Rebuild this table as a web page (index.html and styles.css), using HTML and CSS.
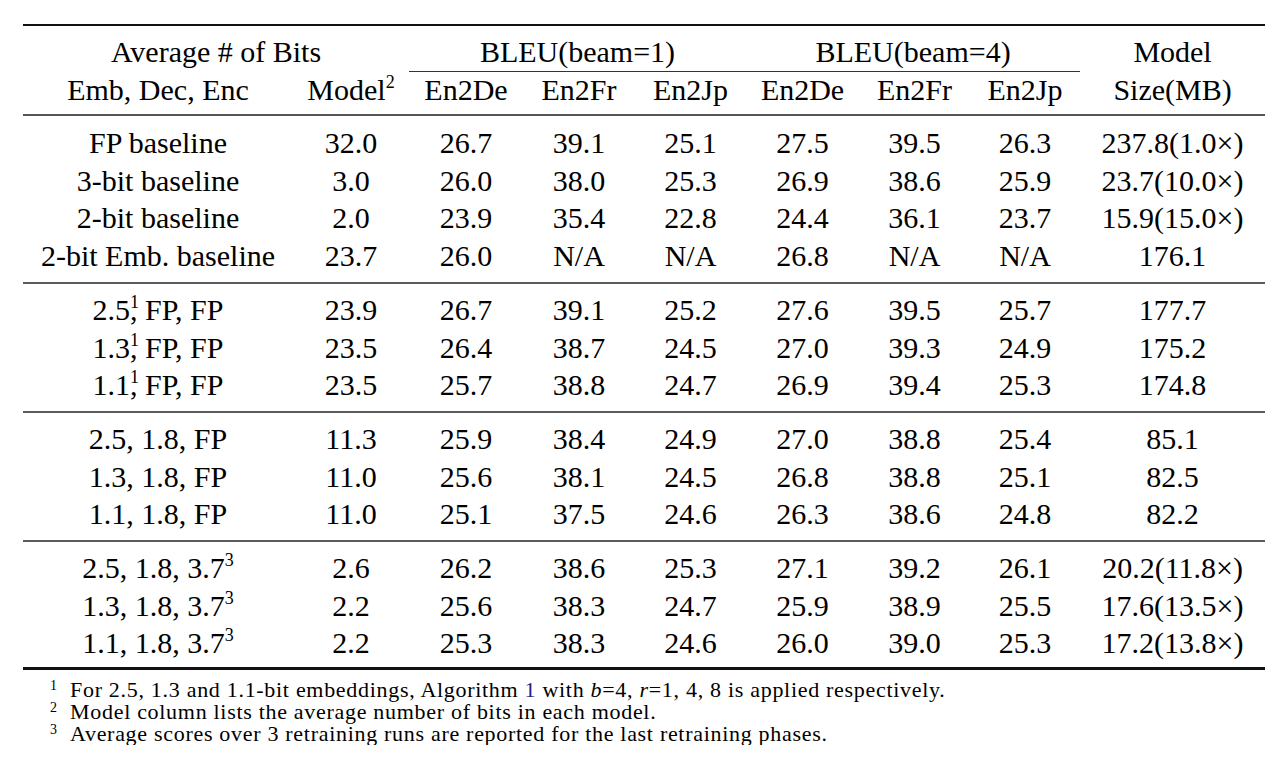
FILE: index.html
```html
<!DOCTYPE html>
<html lang="en">

<head>
  <meta charset="UTF-8" />
  <meta name="viewport" content="width=device-width, initial-scale=1.0" />
  <title>Quantization results</title>
  <link rel="stylesheet" href="styles.css">
</head>

<body>
  <div class="page">
    <table class="results">
      <colgroup>
        <col class="c-bits">
        <col class="c-model">
        <col class="c-b1de">
        <col class="c-b1fr">
        <col class="c-b1jp">
        <col class="c-b4de">
        <col class="c-b4fr">
        <col class="c-b4jp">
        <col class="c-size">
      </colgroup>
      <thead>
        <tr class="head-top">
          <th colspan="2">Average # of Bits</th>
          <th colspan="3" class="span-rule">BLEU(beam=1)</th>
          <th colspan="3" class="span-rule">BLEU(beam=4)</th>
          <th>Model</th>
        </tr>
        <tr class="head-bottom">
          <th>Emb, Dec, Enc</th>
          <th>Model<sup>2</sup></th>
          <th>En2De</th>
          <th>En2Fr</th>
          <th>En2Jp</th>
          <th>En2De</th>
          <th>En2Fr</th>
          <th>En2Jp</th>
          <th>Size(MB)</th>
        </tr>
      </thead>
      <tbody class="first-group">
        <tr><td>FP baseline</td><td>32.0</td><td>26.7</td><td>39.1</td><td>25.1</td><td>27.5</td><td>39.5</td><td>26.3</td><td>237.8(1.0×)</td></tr>
        <tr><td>3-bit baseline</td><td>3.0</td><td>26.0</td><td>38.0</td><td>25.3</td><td>26.9</td><td>38.6</td><td>25.9</td><td>23.7(10.0×)</td></tr>
        <tr><td>2-bit baseline</td><td>2.0</td><td>23.9</td><td>35.4</td><td>22.8</td><td>24.4</td><td>36.1</td><td>23.7</td><td>15.9(15.0×)</td></tr>
        <tr><td>2-bit Emb. baseline</td><td>23.7</td><td>26.0</td><td>N/A</td><td>N/A</td><td>26.8</td><td>N/A</td><td>N/A</td><td>176.1</td></tr>
      </tbody>
      <tbody>
        <tr><td>2.5<sup>1</sup><span class="tuck">,</span> FP, FP</td><td>23.9</td><td>26.7</td><td>39.1</td><td>25.2</td><td>27.6</td><td>39.5</td><td>25.7</td><td>177.7</td></tr>
        <tr><td>1.3<sup>1</sup><span class="tuck">,</span> FP, FP</td><td>23.5</td><td>26.4</td><td>38.7</td><td>24.5</td><td>27.0</td><td>39.3</td><td>24.9</td><td>175.2</td></tr>
        <tr><td>1.1<sup>1</sup><span class="tuck">,</span> FP, FP</td><td>23.5</td><td>25.7</td><td>38.8</td><td>24.7</td><td>26.9</td><td>39.4</td><td>25.3</td><td>174.8</td></tr>
      </tbody>
      <tbody>
        <tr><td>2.5, 1.8, FP</td><td>11.3</td><td>25.9</td><td>38.4</td><td>24.9</td><td>27.0</td><td>38.8</td><td>25.4</td><td>85.1</td></tr>
        <tr><td>1.3, 1.8, FP</td><td>11.0</td><td>25.6</td><td>38.1</td><td>24.5</td><td>26.8</td><td>38.8</td><td>25.1</td><td>82.5</td></tr>
        <tr><td>1.1, 1.8, FP</td><td>11.0</td><td>25.1</td><td>37.5</td><td>24.6</td><td>26.3</td><td>38.6</td><td>24.8</td><td>82.2</td></tr>
      </tbody>
      <tbody class="last-group">
        <tr><td>2.5, 1.8, 3.7<sup>3</sup></td><td>2.6</td><td>26.2</td><td>38.6</td><td>25.3</td><td>27.1</td><td>39.2</td><td>26.1</td><td>20.2(11.8×)</td></tr>
        <tr><td>1.3, 1.8, 3.7<sup>3</sup></td><td>2.2</td><td>25.6</td><td>38.3</td><td>24.7</td><td>25.9</td><td>38.9</td><td>25.5</td><td>17.6(13.5×)</td></tr>
        <tr><td>1.1, 1.8, 3.7<sup>3</sup></td><td>2.2</td><td>25.3</td><td>38.3</td><td>24.6</td><td>26.0</td><td>39.0</td><td>25.3</td><td>17.2(13.8×)</td></tr>
      </tbody>
    </table>

    <div class="notes">
      <div class="note"><span class="mark">1</span>For 2.5, 1.3 and 1.1-bit embeddings, Algorithm <span class="ref">1</span> with <i>b</i>=4, <i>r</i>=1, 4, 8 is applied respectively.</div>
      <div class="note"><span class="mark">2</span>Model column lists the average number of bits in each model.</div>
      <div class="note"><span class="mark">3</span>Average scores over 3 retraining runs are reported for the last retraining phases.</div>
    </div>
  </div>
</body>

</html>
```

FILE: styles.css
```css
body {
  margin: 0;
  padding: 0;
  background: #fff;
  color: #000;
  font-family: "Liberation Serif", "Times New Roman", serif;
}

.page {
  padding: 24px 0 0 23px;
}

.results {
  width: 1242px;
  table-layout: fixed;
  border-collapse: separate;
  border-spacing: 0;
  font-family: "Liberation Serif", "Times New Roman", serif;
  font-size: 30px;
}

.c-bits { width: 270px; }
.c-model { width: 116px; }
.c-b1de { width: 114px; }
.c-b1fr { width: 112px; }
.c-b1jp { width: 111px; }
.c-b4de { width: 113px; }
.c-b4fr { width: 111px; }
.c-b4jp { width: 110px; }
.c-size { width: 185px; }

th, td {
  padding: 0;
  text-align: center;
  vertical-align: top;
  font-weight: normal;
  white-space: nowrap;
}

th {
  line-height: 35px;
}

td {
  line-height: 37.7px;
}

/* header rules */
.head-top th {
  border-top: 2px solid #111;
  padding-top: 8px;
  padding-bottom: 2px;
}

.span-rule {
  border-bottom: 1px solid #333;
}

.head-bottom th {
  padding-bottom: 7px;
  border-bottom: 2px solid #555;
}

/* row groups */
tbody tr:first-child td {
  padding-top: 7px;
}

.first-group tr:first-child td {
  padding-top: 8px;
}

tbody tr:last-child td {
  padding-bottom: 7px;
  border-bottom: 2px solid #5c5c5c;
}

.last-group tr:last-child td {
  padding-bottom: 5px;
  border-bottom: 3px solid #111;
}

sup {
  font-size: 18px;
  line-height: 0;
  vertical-align: 12px;
}

.tuck {
  margin-left: -9px;
}

/* footnotes */
.notes {
  margin-top: 9px;
  font-size: 22px;
  letter-spacing: 0.7px;
  line-height: 22px;
}

.note {
  padding-left: 27px;
}

.mark {
  display: inline-block;
  width: 20px;
  font-size: 14px;
  letter-spacing: 0;
  vertical-align: 7px;
  line-height: 0;
}

.ref {
  color: #22228a;
}
```
